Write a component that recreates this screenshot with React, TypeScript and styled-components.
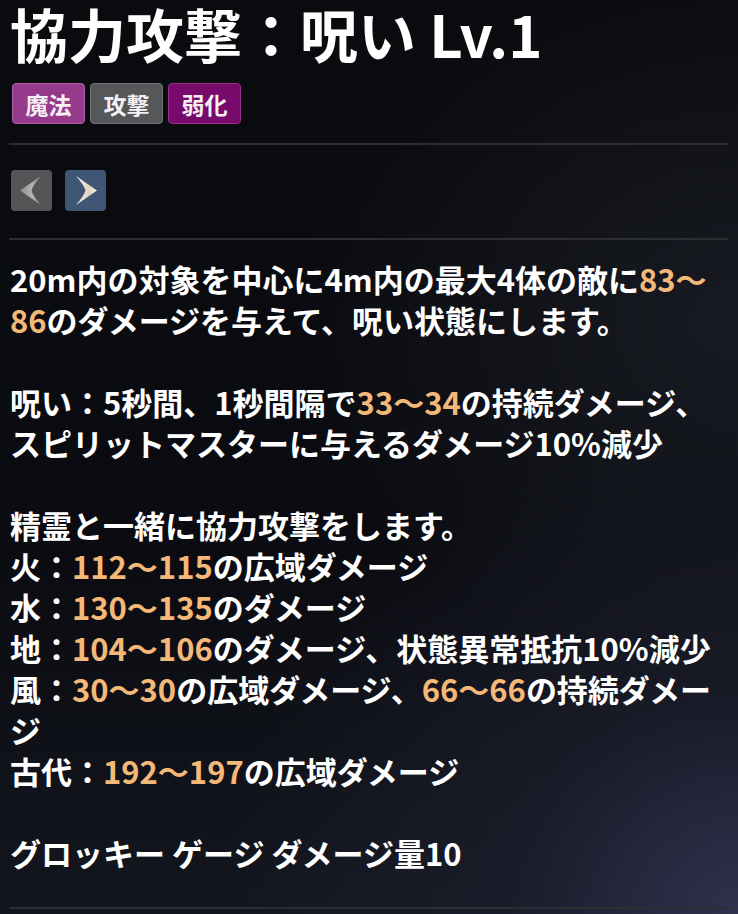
import styled, { createGlobalStyle } from 'styled-components';

const GlobalStyle = createGlobalStyle`
  html, body {
    margin: 0;
    padding: 0;
    background: #0a0b0f;
  }
  body {
    font-family: 'Noto Sans CJK JP', 'Noto Sans', sans-serif;
    color: #ffffff;
  }
`;

type Seg = string | { hl: string };

const tags = [
  { label: '魔法', bg: '#963a8b', border: '#b05ea6' },
  { label: '攻撃', bg: '#555759', border: '#707274' },
  { label: '弱化', bg: '#780a6c', border: '#942e88' },
];

const lines: Seg[][] = [
  ['20m内の対象を中心に4m内の最大4体の敵に', { hl: '83～86' }, 'のダメージを与えて、呪い状態にします。'],
  [],
  ['呪い：5秒間、1秒間隔で', { hl: '33～34' }, 'の持続ダメージ、スピリットマスターに与えるダメージ10%減少'],
  [],
  ['精霊と一緒に協力攻撃をします。'],
  ['火：', { hl: '112～115' }, 'の広域ダメージ'],
  ['水：', { hl: '130～135' }, 'のダメージ'],
  ['地：', { hl: '104～106' }, 'のダメージ、状態異常抵抗10%減少'],
  ['風：', { hl: '30～30' }, 'の広域ダメージ、', { hl: '66～66' }, 'の持続ダメージ'],
  ['古代：', { hl: '192～197' }, 'の広域ダメージ'],
  [],
  ['グロッキー ゲージ ダメージ量10'],
];

const App = () => {
  return (
    <Page>
      <GlobalStyle />
      <Title>協力攻撃：呪い Lv.1</Title>
      <TagRow>
        {tags.map((t) => (
          <Tag key={t.label} $bg={t.bg} $border={t.border}>
            {t.label}
          </Tag>
        ))}
      </TagRow>
      <Divider />
      <NavRow>
        <NavButton $variant="off" aria-label="prev">
          <svg width="41" height="41" viewBox="0 0 41 41">
            <defs>
              <linearGradient id="gOff" x1="0" y1="0" x2="1" y2="0">
                <stop offset="0" stopColor="#8c8c8c" />
                <stop offset="0.55" stopColor="#b4b4b4" />
                <stop offset="1" stopColor="#8e8e8e" />
              </linearGradient>
            </defs>
            <path d="M30 6 L9 20.5 L30 35 Q22 26 20.5 20.5 Q22 15 30 6 Z" fill="url(#gOff)" />
          </svg>
        </NavButton>
        <NavButton $variant="on" aria-label="next">
          <svg width="41" height="41" viewBox="0 0 41 41">
            <defs>
              <linearGradient id="gOn" x1="0" y1="0" x2="1" y2="0">
                <stop offset="0" stopColor="#fbf8f0" />
                <stop offset="0.6" stopColor="#e2d4c0" />
                <stop offset="1" stopColor="#f3ece2" />
              </linearGradient>
            </defs>
            <path d="M11 6 L32 20.5 L11 35 Q19 26 20.5 20.5 Q19 15 11 6 Z" fill="url(#gOn)" />
          </svg>
        </NavButton>
      </NavRow>
      <Divider />
      <Description>
        {lines.map((line, i) =>
          line.length === 0 ? (
            <Blank key={i} />
          ) : (
            <Line key={i}>
              {line.map((seg, j) =>
                typeof seg === 'string' ? seg : <Num key={j}>{seg.hl}</Num>
              )}
            </Line>
          )
        )}
      </Description>
      <Divider $bottom />
    </Page>
  );
};

export default App;

const Page = styled.div`
  min-height: 914px;
  box-sizing: border-box;
  padding: 0 10px 0 9px;
  background:
    radial-gradient(ellipse 70% 55% at 100% 100%, rgba(52, 54, 86, 0.85) 0%, rgba(30, 32, 48, 0.6) 45%, rgba(10, 11, 15, 0) 100%),
    radial-gradient(ellipse 60% 40% at 100% 35%, rgba(30, 33, 42, 0.7) 0%, rgba(10, 11, 15, 0) 100%),
    linear-gradient(180deg, #0a0b0f 0%, #0b0c11 60%, #14161f 100%);
`;

const Title = styled.h1`
  margin: 0;
  padding: 0 0 0 1px;
  font-size: 58px;
  line-height: 66px;
  font-weight: 700;
  letter-spacing: 0;
`;

const TagRow = styled.div`
  display: flex;
  gap: 5px;
  margin-top: 17px;
  padding-left: 3px;
`;

const Tag = styled.span<{ $bg: string; $border: string }>`
  display: flex;
  align-items: center;
  justify-content: center;
  width: 73px;
  height: 41px;
  box-sizing: border-box;
  border-radius: 4px;
  background: ${(p) => p.$bg};
  border: 1px solid ${(p) => p.$border};
  font-size: 23px;
  font-weight: 700;
  color: #f4f0f4;
`;

const Divider = styled.hr<{ $bottom?: boolean }>`
  margin: ${(p) => (p.$bottom ? '34px 0 0' : '19px 0 0')};
  border: 0;
  height: 2px;
  background: #2c2e34;
`;

const NavRow = styled.div`
  display: flex;
  gap: 13px;
  padding: 25px 0 8px 2px;
`;

const NavButton = styled.button<{ $variant: 'on' | 'off' }>`
  width: 41px;
  height: 41px;
  padding: 0;
  border: 0;
  border-radius: 4px;
  display: flex;
  align-items: center;
  justify-content: center;
  background: ${(p) => (p.$variant === 'on' ? '#3f5774' : '#545556')};
`;

const Description = styled.div`
  margin-top: 18px;
  padding: 0 12px 0 1px;
  font-size: 31px;
  line-height: 41px;
  font-weight: 700;
  color: #ffffff;
`;

const Line = styled.div``;

const Blank = styled.div`
  height: 41px;
`;

const Num = styled.span`
  color: #f4b878;
`;
